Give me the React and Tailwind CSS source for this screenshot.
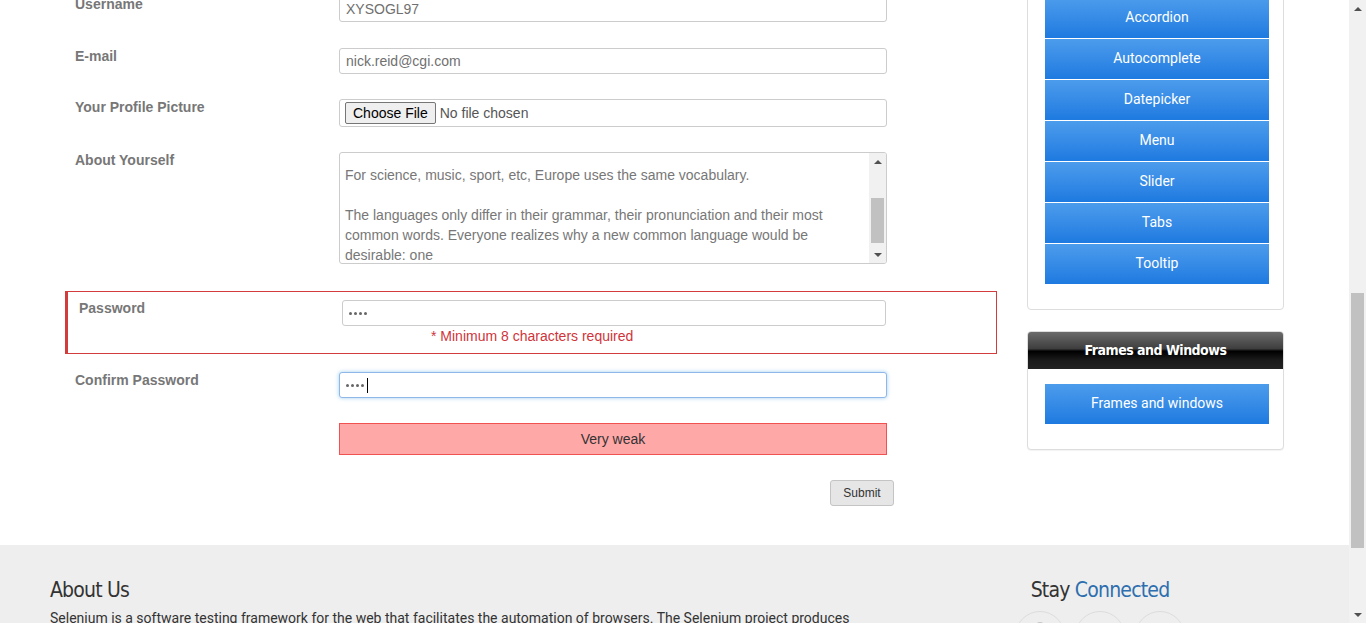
import React from "react";

const sans = { fontFamily: '"Liberation Sans", Arial, sans-serif' };
const narrow = "font-['DejaVu_Sans_Condensed','DejaVu_Sans',sans-serif] font-stretch-condensed";

const widgets = ["Accordion", "Autocomplete", "Datepicker", "Menu", "Slider", "Tabs", "Tooltip"];

function BlueButton({ children }) {
  return (
    <div className="ml-[17px] flex h-10 w-[224px] items-center justify-center bg-gradient-to-b from-[#4c9cec] to-[#1d7ae0] pb-[2px] font-['Roboto',sans-serif] text-sm text-white">
      {children}
    </div>
  );
}

function Row({ label, children, className = "" }) {
  return (
    <div className={`flex pl-[10px] ${className}`}>
      <div className="w-[264px] text-sm font-bold leading-5 text-[#777]">{label}</div>
      <div className="w-[548px] pt-[2px]">{children}</div>
    </div>
  );
}

function TextInput({ value }) {
  return (
    <div className="flex h-[26px] items-center rounded-[3px] border border-[#ccc] bg-white px-[6px] text-sm text-[#707070]">
      {value}
    </div>
  );
}

function Dots({ caret }) {
  return (
    <span className="flex items-center gap-[2px]">
      {[0, 1, 2, 3].map((i) => (
        <span key={i} className="h-[3px] w-[3px] rounded-full bg-[#666]" />
      ))}
      {caret && <span className="ml-[1px] h-[15px] w-px bg-black" />}
    </span>
  );
}

export default function App() {
  return (
    <div className="flex h-[623px] w-[1366px] overflow-hidden bg-white" style={sans}>
      <div className="flex w-[1349px] flex-col">
        {/* Content */}
        <div className="flex h-[545px] shrink-0 pl-[65px]">
          {/* Form */}
          <div className="mt-[-6px] w-[932px]">
            <Row label="Username" className="mb-[24px]">
              <TextInput value="XYSOGL97" />
            </Row>
            <Row label="E-mail" className="mb-[23px]">
              <TextInput value="nick.reid@cgi.com" />
            </Row>
            <Row label="Your Profile Picture" className="mb-[23px]">
              <div className="flex h-[28px] items-center rounded-[3px] border border-[#ccc] bg-white px-[5px] text-sm">
                <span className="flex h-[22px] items-center rounded-[2px] border border-[#767676] bg-[#efefef] px-[7px] text-black">
                  Choose File
                </span>
                <span className="ml-[4px] text-[#555]">No file chosen</span>
              </div>
            </Row>
            <Row label="About Yourself" className="mb-[27px]">
              <div className="flex h-[112px] overflow-hidden rounded-[3px] border border-[#ccc] bg-white">
                <div className="flex-1 px-[5px] pt-[12px] text-sm leading-5 text-[#777]">
                  <p>For science, music, sport, etc, Europe uses the same vocabulary.</p>
                  <p className="mt-5">
                    The languages only differ in their grammar, their pronunciation and their most common words.
                    Everyone realizes why a new common language would be desirable: one
                  </p>
                </div>
                <div className="flex w-[17px] flex-col items-center bg-[#f1f1f1]">
                  <div className="flex h-[17px] items-center justify-center">
                    <span className="h-0 w-0 border-x-[4px] border-b-[4px] border-x-transparent border-b-[#505050]" />
                  </div>
                  <div className="mt-[28px] h-[45px] w-[13px] bg-[#c1c1c1]" />
                  <div className="flex-1" />
                  <div className="flex h-[17px] items-center justify-center">
                    <span className="h-0 w-0 border-x-[4px] border-t-[4px] border-x-transparent border-t-[#505050]" />
                  </div>
                </div>
              </div>
            </Row>

            {/* Password with error */}
            <div className="mb-[16px] h-[63px] border border-l-[3px] border-[#d33c3c] pl-[11px] pt-[6px]">
              <div className="flex">
                <div className="w-[263px] text-sm font-bold leading-5 text-[#777]">Password</div>
                <div className="w-[544px] pt-[2px]">
                  <div className="flex h-[26px] items-center rounded-[3px] border border-[#ccc] bg-white px-[6px]">
                    <Dots />
                  </div>
                  <div className="ml-[89px] mt-[2px] text-sm leading-4 text-[#d0343a]">
                    * Minimum 8 characters required
                  </div>
                </div>
              </div>
            </div>

            <Row label="Confirm Password" className="mb-[25px]">
              <div className="flex h-[26px] items-center rounded-[3px] border border-[#8fb8e8] bg-white px-[6px] shadow-[0_0_4px_rgba(102,175,233,0.6)]">
                <Dots caret />
              </div>
            </Row>

            <div className="mb-[25px] ml-[274px] flex h-[32px] w-[548px] items-center justify-center border border-[#f05252] bg-[#ffa8a8] text-sm text-[#333]">
              Very weak
            </div>

            <div className="flex w-[829px] justify-end">
              <button className="h-[26px] w-[64px] rounded-[3px] border border-[#c4c4c4] bg-[#e6e6e6] text-xs text-[#333]">
                Submit
              </button>
            </div>
          </div>

          {/* Sidebar */}
          <div className="ml-[30px] w-[257px]">
            <div className="mt-[-20px] flex flex-col gap-px rounded-b-[4px] border border-[#ddd] bg-white pb-[25px] pt-[17px]">
              {widgets.map((w) => (
                <BlueButton key={w}>{w}</BlueButton>
              ))}
            </div>
            <div className="mt-[21px] overflow-hidden rounded-[4px] border border-[#ddd] bg-white pb-[25px] shadow-[0_1px_1px_rgba(0,0,0,0.05)]">
              <div
                className={`flex h-[37px] items-center justify-center bg-[linear-gradient(to_bottom,#6b6b6b_0%,#3e3e3e_45%,#000_52%,#1a1a1a_75%,#222_100%)] text-[14px] font-semibold tracking-[-0.5px] text-white ${narrow}`}
              >
                Frames and Windows
              </div>
              <div className="mt-[15px]">
                <BlueButton>Frames and windows</BlueButton>
              </div>
            </div>
          </div>
        </div>

        {/* Footer */}
        <div className="flex flex-1 bg-[#eeeeee] pl-[50px] pt-[30px]">
          <div className="w-[965px]">
            <h2 className={`text-[21px] leading-[30px] tracking-[-0.8px] text-[#333] ${narrow}`}>About Us</h2>
            <p className="mt-[3px] whitespace-nowrap font-['Roboto',sans-serif] text-sm leading-5 text-[#333]">
              Selenium is a software testing framework for the web that facilitates the automation of browsers. The
              Selenium project produces
            </p>
          </div>
          <div className="w-[170px]">
            <h2
              className={`whitespace-nowrap text-center text-[21px] leading-[30px] tracking-[-0.8px] text-[#333] ${narrow}`}
            >
              Stay <span className="text-[#2d6fae]">Connected</span>
            </h2>
            <div className="mt-[6px] flex gap-[10px]">
              {[0, 1, 2].map((i) => (
                <div
                  key={i}
                  className="flex h-[50px] w-[50px] justify-center rounded-full border border-[#dcdcdc] pt-[10px]"
                >
                  {i === 0 && <span className="h-[6px] w-[6px] rounded-t-[2px] bg-[#c8c8c8]" />}
                </div>
              ))}
            </div>
          </div>
        </div>
      </div>

      {/* Page scrollbar */}
      <div className="flex w-[17px] flex-col items-center bg-[#f1f1f1]">
        <div className="flex h-[17px] items-center justify-center">
          <span className="h-0 w-0 border-x-[4px] border-b-[4px] border-x-transparent border-b-[#505050]" />
        </div>
        <div className="mt-[276px] h-[255px] w-[13px] bg-[#c1c1c1]" />
        <div className="flex-1" />
        <div className="flex h-[17px] items-center justify-center">
          <span className="h-0 w-0 border-x-[4px] border-t-[4px] border-x-transparent border-t-[#505050]" />
        </div>
      </div>
    </div>
  );
}
